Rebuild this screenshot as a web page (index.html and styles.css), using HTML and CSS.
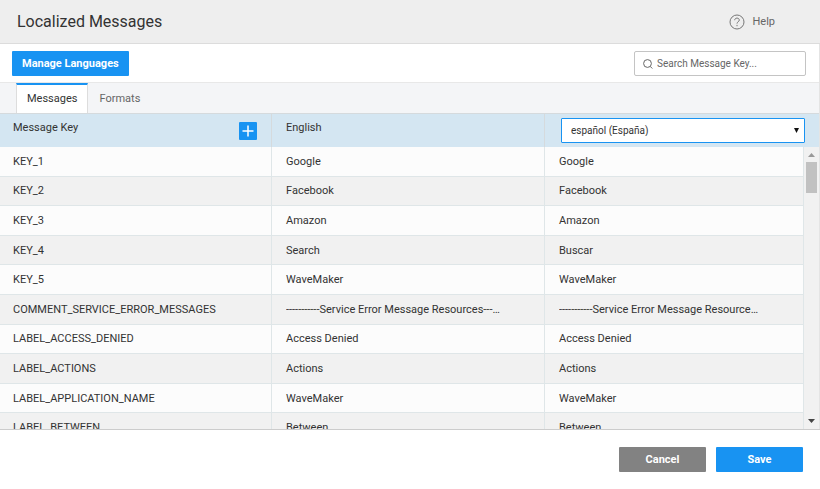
FILE: index.html
```html
<!DOCTYPE html>
<html lang="en">
<head>
<meta charset="utf-8">
<title>Localized Messages</title>
<link rel="stylesheet" href="styles.css">
</head>
<body>
<div class="dialog">
  <header class="dialog-header">
    <h1 class="dialog-title">Localized Messages</h1>
    <a class="help" href="#">
      <svg class="help-icon" viewBox="0 0 16 16" aria-hidden="true">
        <circle cx="8" cy="8" r="7"/>
        <path d="M5.7 6.2C5.7 4.9 6.7 4.1 8 4.1s2.3.8 2.3 2c0 1.600-2.300 1.700-2.300 3.500M8 10.900v1.300"/>
      </svg>
      <span>Help</span>
    </a>
  </header>
  <main class="dialog-body">
    <div class="toolbar">
      <button class="button button-primary" type="button">Manage Languages</button>
      <label class="search">
        <svg class="search-icon" viewBox="0 0 10 10" aria-hidden="true"><circle cx="4.500" cy="4.500" r="3.900"/><path d="M7.300 7.500l2 2"/></svg>
        <input class="search-input" type="text" placeholder="Search Message Key..." aria-label="Search Message Key">
      </label>
    </div>
    <nav class="tabs">
      <a class="tab tab-active" href="#">Messages</a>
      <a class="tab" href="#">Formats</a>
    </nav>
    <table class="grid grid-head">
      <colgroup><col class="col-key"><col class="col-base"><col></colgroup>
      <thead>
        <tr>
          <th scope="col"><div class="head-key"><span>Message Key</span>
            <button class="add" type="button" aria-label="Add message"><svg class="add-icon" viewBox="0 0 12 12" aria-hidden="true"><path d="M6 0.500v11M0.500 6h11"/></svg></button></div></th>
          <th scope="col">English</th>
          <th scope="col" class="head-language"><div class="language">
            <select class="language-select" aria-label="Language"><option>español (España)</option></select>
            <svg class="language-arrow" viewBox="0 0 6 6" aria-hidden="true"><path d="M0 0h6L3 6z"/></svg>
          </div></th>
        </tr>
      </thead>
    </table>
    <div class="scroll-area">
      <div class="rows">
        <table class="grid grid-body">
          <colgroup><col class="col-key"><col class="col-base"><col></colgroup>
          <tbody>
            <tr><td>KEY_1</td><td>Google</td><td>Google</td></tr>
            <tr><td>KEY_2</td><td>Facebook</td><td>Facebook</td></tr>
            <tr><td>KEY_3</td><td>Amazon</td><td>Amazon</td></tr>
            <tr><td>KEY_4</td><td>Search</td><td>Buscar</td></tr>
            <tr><td>KEY_5</td><td>WaveMaker</td><td>WaveMaker</td></tr>
            <tr><td>COMMENT_SERVICE_ERROR_MESSAGES</td><td><div class="clip">-----------Service Error Message Resources-----------</div></td><td><div class="clip">-----------Service Error Message Resources-----------</div></td></tr>
            <tr><td>LABEL_ACCESS_DENIED</td><td>Access Denied</td><td>Access Denied</td></tr>
            <tr><td>LABEL_ACTIONS</td><td>Actions</td><td>Actions</td></tr>
            <tr><td>LABEL_APPLICATION_NAME</td><td>WaveMaker</td><td>WaveMaker</td></tr>
            <tr><td>LABEL_BETWEEN</td><td>Between</td><td>Between</td></tr>
          </tbody>
        </table>
      </div>
      <div class="scrollbar" aria-hidden="true">
        <svg class="scroll-arrow" viewBox="0 0 7 4"><path d="M0 4L3.500 0 7 4z"/></svg>
        <div class="scroll-thumb"></div>
        <svg class="scroll-arrow scroll-arrow-down" viewBox="0 0 7 4"><path d="M0 0h7L3.500 4z"/></svg>
      </div>
    </div>
  </main>
  <footer class="dialog-footer">
    <button class="button button-wide button-muted" type="button">Cancel</button>
    <button class="button button-wide button-primary" type="button">Save</button>
  </footer>
</div>
</body>
</html>
```
FILE: styles.css
```css
* {
  box-sizing: border-box;
}

body {
  margin: 0;
  font-family: Roboto, sans-serif;
  font-size: 11px;
  line-height: 16px;
  color: #333;
  background: #fff;
}

button,
input,
select {
  font-family: inherit;
}

.dialog {
  display: flex;
  flex-direction: column;
  height: 100vh;
}

.dialog-header {
  display: flex;
  align-items: center;
  justify-content: space-between;
  padding: 12px 45px 11px 17px;
  background: #eee;
  border-bottom: 1px solid #dcdcdc;
}

.dialog-title {
  margin: 0;
  font-size: 16px;
  line-height: 20px;
  font-weight: 400;
}

.help {
  display: flex;
  align-items: center;
  gap: 7px;
  color: #666;
  text-decoration: none;
}

.help-icon {
  width: 16px;
  height: 16px;
  fill: none;
  stroke: #777;
}

.dialog-body {
  display: flex;
  flex: 1;
  flex-direction: column;
  min-height: 0;
  border-right: 1px solid #e4e4e4;
}

.toolbar {
  display: flex;
  align-items: center;
  justify-content: space-between;
  padding: 7px 13px 6px 12px;
  border-bottom: 1px solid #e8e8e8;
}

.button {
  height: 25px;
  padding: 0 10px;
  border: 0;
  border-radius: 1px;
  color: #fff;
  font-size: 11px;
  font-weight: 700;
}

.button-primary {
  background: #1893f2;
}

.button-muted {
  background: #828282;
}

.button-wide {
  width: 87px;
}

.search {
  display: flex;
  align-items: center;
  gap: 4px;
  width: 172px;
  height: 25px;
  padding: 0 8px;
  border: 1px solid #c4c4c4;
  border-radius: 2px;
}

.search-icon {
  flex: none;
  width: 10px;
  height: 10px;
  fill: none;
  stroke: #666;
}

.search-input {
  width: 100%;
  padding: 0;
  border: 0;
  outline: 0;
  font-size: 10px;
}

.search-input::placeholder {
  color: #666;
}

.tabs {
  display: flex;
  padding-left: 16px;
  background: #f4f5f7;
}

.tab {
  padding: 5px 10px 6px;
  border: 1px solid transparent;
  border-width: 2px 1px 0;
  line-height: 17px;
  color: #666;
  text-decoration: none;
}

.tab-active {
  border-color: #1893f2 #ddd transparent;
  color: #333;
  background: #fff;
}

.grid {
  width: 100%;
  table-layout: fixed;
  border-collapse: separate;
  border-spacing: 0;
}

.col-key {
  width: 272px;
}

.col-base {
  width: 273px;
}

.grid-head th {
  height: 34px;
  padding: 6px 14px 0;
  border-top: 1px solid #d5dadd;
  border-right: 1px solid #d5dadd;
  vertical-align: top;
  text-align: left;
  font-weight: 400;
  background: #d4e6f2;
}

.grid-head th:first-child,
.grid-body td:first-child {
  padding-left: 13px;
}

.grid-head th:last-child {
  border-right: 0;
}

.head-key {
  display: flex;
  justify-content: space-between;
}

.add {
  display: flex;
  align-items: center;
  justify-content: center;
  width: 18px;
  height: 18px;
  margin-top: 2px;
  padding: 0;
  border: 0;
  border-radius: 1px;
  background: #1893f2;
}

.add-icon {
  width: 12px;
  height: 12px;
  stroke: #fff;
  stroke-width: 1.5;
}

.grid-head .head-language {
  padding: 4px 14px 4px 16px;
}

.language {
  position: relative;
}

.language-select {
  display: block;
  width: 100%;
  height: 25px;
  padding: 0 9px;
  border: 1px solid #1893f2;
  border-radius: 1px;
  appearance: none;
  font-size: 10px;
  color: #333;
  background: #fff;
}

.language-arrow {
  position: absolute;
  top: 10px;
  right: 6px;
  width: 5px;
  height: 5px;
  fill: #111;
  pointer-events: none;
}

.scroll-area {
  display: flex;
  flex: 1;
  min-height: 0;
}

.rows {
  flex: 1;
  overflow: hidden;
}

.grid-body {
  height: 296px;
}

.grid-body td {
  padding: 1px 14px 0;
  border-right: 1px solid #dfe6e8;
  border-bottom: 1px solid #dfe6e8;
  background: #fcfcfc;
}

.grid-body tr:nth-child(even) td {
  background: #f1f1f1;
}

.clip {
  width: 88%;
  overflow: hidden;
  text-overflow: ellipsis;
  white-space: nowrap;
}

.scrollbar {
  display: flex;
  flex-direction: column;
  align-items: center;
  width: 15px;
  padding: 6px 0;
  background: #f1f1f1;
}

.scroll-arrow {
  width: 7px;
  height: 4px;
  fill: #999;
}

.scroll-arrow-down {
  margin-top: auto;
  fill: #444;
}

.scroll-thumb {
  width: 11px;
  height: 31px;
  margin-top: 5px;
  background: #c1c1c1;
}

.dialog-footer {
  display: flex;
  justify-content: flex-end;
  gap: 10px;
  padding: 17px;
  border-top: 1px solid #ccc;
}
```
